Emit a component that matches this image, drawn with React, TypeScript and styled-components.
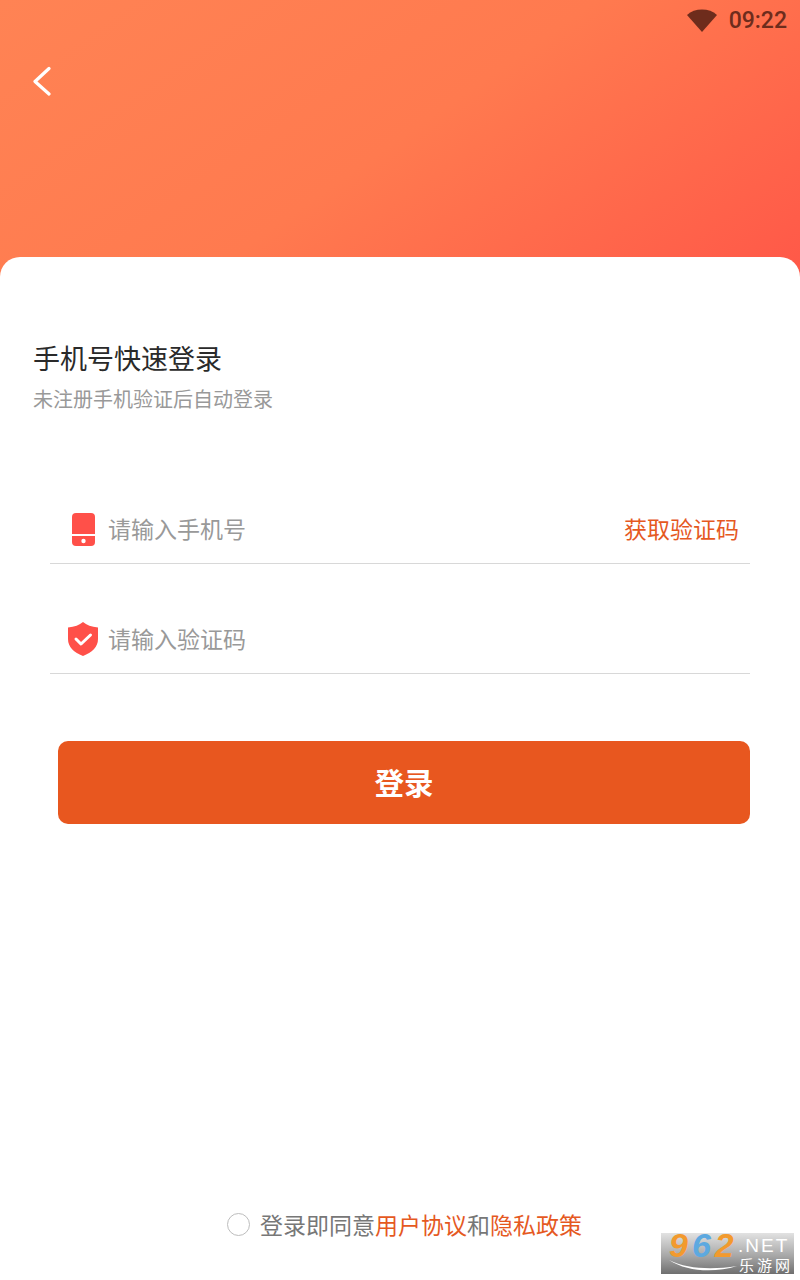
import React from "react";
import styled, { createGlobalStyle } from "styled-components";

const cjk = `"Noto Sans CJK SC", "Noto Sans", sans-serif`;

const Global = createGlobalStyle`
  html, body { margin: 0; padding: 0; background: #fff; }
  * { box-sizing: border-box; }
`;

const Page = styled.div`
  position: relative;
  width: 800px;
  height: 1280px;
  display: flex;
  flex-direction: column;
  overflow: hidden;
  background: #fff;
  font-family: ${cjk};
`;

const Hero = styled.header`
  height: 277px;
  flex: none;
  padding: 8px 13px 0 33px;
  background: linear-gradient(145deg, #ff8354 0%, #ff7a4f 50%, #ff5848 100%);
`;

const StatusBar = styled.div`
  display: flex;
  justify-content: flex-end;
  align-items: center;
  gap: 12px;
  height: 26px;
`;

const Clock = styled.span`
  font-family: Roboto, sans-serif;
  font-weight: 500;
  font-size: 23px;
  line-height: 26px;
  color: #6e2c1c;
`;

const BackButton = styled.div`
  margin-top: 32px;
  width: 20px;
  height: 30px;
`;

const Card = styled.main`
  flex: 1;
  margin-top: -20px;
  background: #fff;
  border-radius: 20px 20px 0 0;
  display: flex;
  flex-direction: column;
  padding-top: 82px;
`;

const Title = styled.h1`
  margin: 0 0 0 33px;
  font-size: 27px;
  line-height: 38px;
  font-weight: 400;
  color: #2a2a2a;
`;

const Subtitle = styled.p`
  margin: 8px 0 0 33px;
  font-size: 20px;
  line-height: 28px;
  color: #999;
`;

const Form = styled.div`
  margin: 63px 50px 0;
  display: flex;
  flex-direction: column;
  gap: 22px;
`;

const Field = styled.div`
  height: 88px;
  display: flex;
  align-items: flex-end;
  padding: 0 11px 17px 0;
  border-bottom: 1px solid #d8d8d8;
`;

const IconSlot = styled.span`
  width: 58px;
  flex: none;
  display: flex;
  justify-content: flex-end;
  padding-right: 13px;
`;

const Placeholder = styled.span`
  flex: 1;
  font-size: 23px;
  line-height: 36px;
  color: #999;
`;

const CodeLink = styled.span`
  font-size: 23px;
  line-height: 36px;
  color: #e5591f;
`;

const LoginButton = styled.button`
  margin: 67px 50px 0 58px;
  height: 83px;
  padding: 0 0 3px;
  border: 0;
  border-radius: 10px;
  background: #e8571f;
  color: #fff;
  font-family: ${cjk};
  font-size: 29.5px;
  font-weight: 700;
`;

const Agreement = styled.footer`
  margin-top: auto;
  margin-bottom: 38px;
  display: flex;
  justify-content: center;
  align-items: center;
  gap: 10px;
  padding-left: 9px;
  font-size: 23px;
  line-height: 36px;
  color: #777;
`;

const Radio = styled.span`
  width: 23px;
  height: 23px;
  border-radius: 50%;
  border: 1.5px solid #bdbdbd;
`;

const Accent = styled.span`
  color: #e5591f;
`;

const Watermark = styled.div`
  position: absolute;
  left: 661px;
  top: 1233px;
  width: 133px;
  height: 41px;
  background: linear-gradient(180deg, #e2e2e2 0%, #a8a8a8 55%, #6f6f6f 100%);
  font-family: "Liberation Sans", sans-serif;
`;

const WatermarkNumber = styled.span`
  position: absolute;
  left: 8px;
  top: -3px;
  font-size: 34px;
  line-height: 30px;
  font-weight: 700;
  font-style: italic;
  letter-spacing: 4px;
  white-space: nowrap;
`;

const Digit = styled.span<{ $tone: string }>`
  color: ${(p) => p.$tone};
`;

const WatermarkNet = styled.span`
  position: absolute;
  left: 77px;
  top: 4px;
  font-size: 19px;
  line-height: 18px;
  letter-spacing: 2px;
  color: #fff;
`;

const WatermarkCn = styled.span`
  position: absolute;
  left: 78px;
  top: 23px;
  font-family: ${cjk};
  font-size: 15px;
  line-height: 18px;
  letter-spacing: 3px;
  color: #fff;
`;

const WatermarkSwoosh = styled.svg`
  position: absolute;
  left: 6px;
  top: 26px;
`;

export default function App() {
  return (
    <Page>
      <Global />
      <Hero>
        <StatusBar>
          <svg width="30" height="24" viewBox="0 0 30 24">
            <path d="M0 6C4 2.300 9.200 0.500 15 0.500s11 1.800 15 5.500L15 23Z" fill="#6e2c1c" />
          </svg>
          <Clock>09:22</Clock>
        </StatusBar>
        <BackButton>
          <svg width="20" height="30" viewBox="0 0 20 30" fill="none">
            <path d="M16 2.500 2 15.500 16 28" stroke="#fff" strokeWidth="3.200" strokeLinecap="round" strokeLinejoin="round" />
          </svg>
        </BackButton>
      </Hero>
      <Card>
        <Title>手机号快速登录</Title>
        <Subtitle>未注册手机验证后自动登录</Subtitle>
        <Form>
          <Field>
            <IconSlot>
              <svg width="23" height="33" viewBox="0 0 23 33">
                <path d="M4 0h15a4 4 0 0 1 4 4v17H0V4a4 4 0 0 1 4-4Z" fill="#ff5049" />
                <path d="M0 23h23v6a4 4 0 0 1-4 4H4a4 4 0 0 1-4-4Z" fill="#ff5049" />
                <circle cx="11.500" cy="28" r="2.200" fill="#fff" />
              </svg>
            </IconSlot>
            <Placeholder>请输入手机号</Placeholder>
            <CodeLink>获取验证码</CodeLink>
          </Field>
          <Field>
            <IconSlot>
              <svg width="30" height="34" viewBox="0 0 30 34" style={{ marginRight: -3 }}>
                <path d="M15 0c3.500 3 8.500 5 15 5.500V17c0 8-6 13.500-15 17C6 30.500 0 25 0 17V5.500C6.500 5 11.500 3 15 0Z" fill="#ff5049" />
                <path d="M8 17l5 5 9.500-9" fill="none" stroke="#fff" strokeWidth="3" strokeLinecap="round" strokeLinejoin="round" />
              </svg>
            </IconSlot>
            <Placeholder>请输入验证码</Placeholder>
          </Field>
        </Form>
        <LoginButton>登录</LoginButton>
        <Agreement>
          <Radio />
          <span>
            登录即同意<Accent>用户协议</Accent>和<Accent>隐私政策</Accent>
          </span>
        </Agreement>
      </Card>
      <Watermark>
        <WatermarkNumber>
          <Digit $tone="#f29a2e">9</Digit>
          <Digit $tone="#5da9e0">6</Digit>
          <Digit $tone="#f29a2e">2</Digit>
        </WatermarkNumber>
        <WatermarkNet>.NET</WatermarkNet>
        <WatermarkCn>乐游网</WatermarkCn>
        <WatermarkSwoosh width="72" height="14" viewBox="0 0 72 14">
          <path d="M2 1C20 10 45 11 70 7 48 14 20 13 2 1Z" fill="#fff" />
        </WatermarkSwoosh>
      </Watermark>
    </Page>
  );
}
